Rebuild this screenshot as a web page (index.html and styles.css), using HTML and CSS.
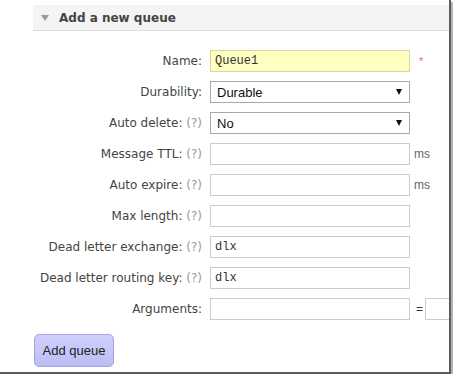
FILE: index.html
```html
<!DOCTYPE html>
<html>
<head>
  <meta charset="UTF-8">
  <title>Add a new queue</title>
  <link rel="stylesheet" href="styles.css">
</head>
<body>
  <div class="janela">
    <div class="cabecalho">
      <span class="seta"></span>
      <h2>Add a new queue</h2>
    </div>

    <form class="formulario">
      <label>Name:</label>
      <input class="campo obrigatorio" type="text" value="Queue1">
      <span class="extra asterisco">*</span>

      <label>Durability:</label>
      <div class="seletor">
        <select class="campo">
          <option>Durable</option>
          <option>Transient</option>
        </select>
      </div>
      <span class="extra"></span>

      <label>Auto delete: <span class="ajuda">(?)</span></label>
      <div class="seletor">
        <select class="campo">
          <option>No</option>
          <option>Yes</option>
        </select>
      </div>
      <span class="extra"></span>

      <label>Message TTL: <span class="ajuda">(?)</span></label>
      <input class="campo" type="text">
      <span class="extra">ms</span>

      <label>Auto expire: <span class="ajuda">(?)</span></label>
      <input class="campo" type="text">
      <span class="extra">ms</span>

      <label>Max length: <span class="ajuda">(?)</span></label>
      <input class="campo" type="text">
      <span class="extra"></span>

      <label>Dead letter exchange: <span class="ajuda">(?)</span></label>
      <input class="campo" type="text" value="dlx">
      <span class="extra"></span>

      <label>Dead letter routing key: <span class="ajuda">(?)</span></label>
      <input class="campo" type="text" value="dlx">
      <span class="extra"></span>

      <label>Arguments:</label>
      <input class="campo" type="text">
      <span class="extra argumentos">= <input class="campo valor" type="text"></span>
    </form>

    <button class="adicionar" type="button">Add queue</button>
  </div>
</body>
</html>
```

FILE: styles.css
```css
body {
  margin: 0;
  background-color: #ffffff;
  font-family: "DejaVu Sans", Verdana, sans-serif;
}

.janela {
  width: 449px;
  height: 372px;
  overflow: hidden;
  background-color: #ffffff;
  border-right: 2px solid #5c5c5c;
  border-bottom: 2px solid #5c5c5c;
  box-shadow: 2px 2px 0 #b4b4b4;
}

.cabecalho {
  margin: 5px 0 0 33px;
  height: 25px;
  background-color: #f4f4f4;
  border-bottom: 1px solid #dcdcdc;
  display: flex;
  align-items: center;
}

.seta {
  width: 0;
  height: 0;
  margin: 1px 10px 0 8px;
  border-left: 4px solid transparent;
  border-right: 4px solid transparent;
  border-top: 6px solid #9a9a9a;
}

.cabecalho h2 {
  margin: 0;
  font-size: 12px;
  font-weight: bold;
  color: #444444;
}

.formulario {
  display: grid;
  grid-template-columns: 169px 200px auto;
  column-gap: 8px;
  row-gap: 9px;
  margin: 19px 0 0 33px;
  align-items: center;
}

.formulario label {
  text-align: right;
  font-size: 12px;
  color: #444444;
  white-space: nowrap;
}

.ajuda {
  color: #999999;
}

.campo {
  box-sizing: border-box;
  width: 200px;
  height: 22px;
  margin: 0;
  padding: 0 4px;
  border: 1px solid #cccccc;
  background-color: #ffffff;
  font-family: "Liberation Mono", monospace;
  font-size: 12px;
  color: #333333;
}

.obrigatorio {
  background-color: #ffffc0;
  border-color: #d6d6a4;
}

.seletor {
  position: relative;
  width: 200px;
}

.seletor select {
  appearance: none;
  -webkit-appearance: none;
  border-color: #a9a9a9;
  padding-left: 6px;
  font-family: "Liberation Sans", Arial, sans-serif;
  font-size: 13px;
  color: #111111;
}

.seletor::after {
  content: "";
  position: absolute;
  right: 8px;
  top: 8px;
  border-left: 3px solid transparent;
  border-right: 3px solid transparent;
  border-top: 6px solid #111111;
  pointer-events: none;
}

.extra {
  margin-left: -4px;
  font-family: "Liberation Sans", Arial, sans-serif;
  font-size: 12px;
  color: #666666;
}

.asterisco {
  margin-left: 1px;
  color: #ee6688;
  font-size: 11px;
}

.argumentos {
  display: flex;
  align-items: center;
  gap: 2px;
  margin-left: -2px;
  color: #333333;
}

.valor {
  width: 60px;
}

.adicionar {
  margin: 14px 0 0 34px;
  width: 80px;
  height: 33px;
  border: 1px solid #a3a3e6;
  border-radius: 5px;
  background: linear-gradient(#d0d0fc, #bdbdf5);
  font-family: "Liberation Sans", Arial, sans-serif;
  font-size: 13px;
  color: #222222;
  cursor: pointer;
}
```
